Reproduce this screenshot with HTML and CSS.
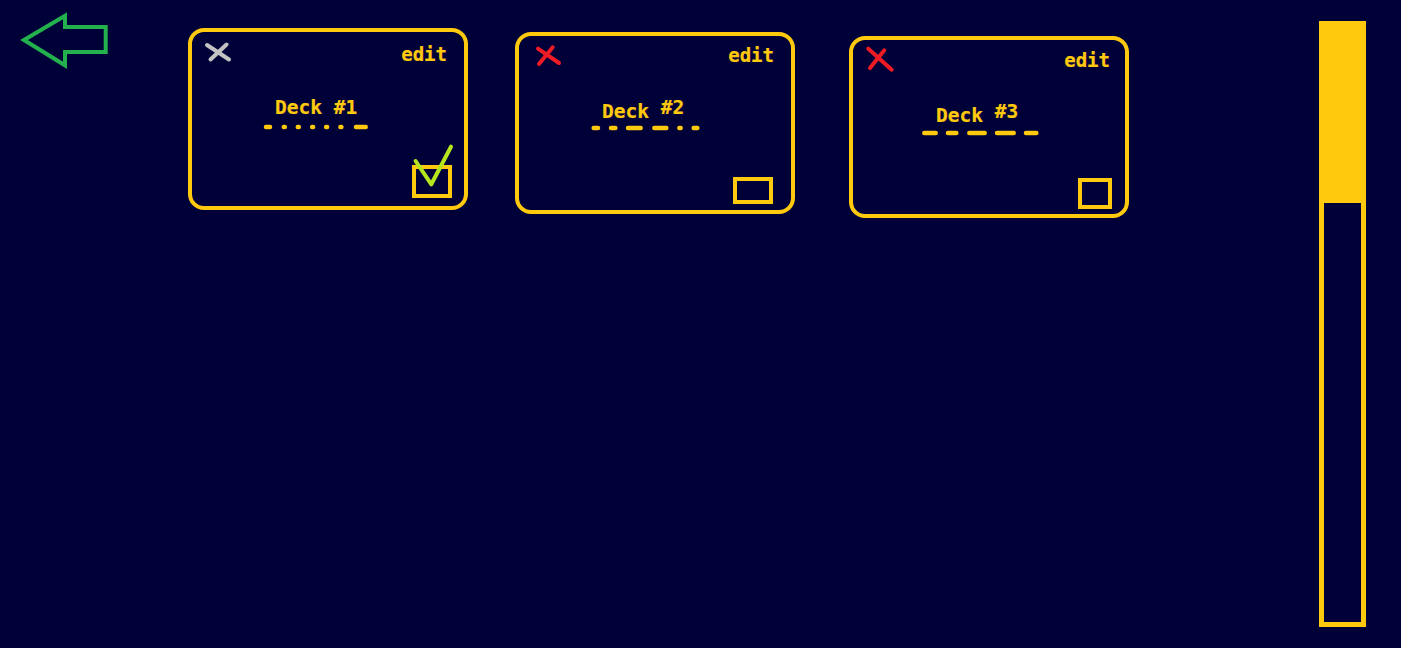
FILE: index.html
```html
<!DOCTYPE html>
<html lang="en">
<head>
<meta charset="utf-8">
<title>Decks</title>
<link rel="stylesheet" href="styles.css">
</head>
<body>
<div class="page">
  <svg class="back" width="90" height="60" viewBox="0 0 90 60">
    <polygon points="4,30 45,5.7 45,17 85.7,17 85.7,42 45,42 45,55.3" fill="none" stroke="#22b14c" stroke-width="4" stroke-linejoin="miter"/>
  </svg>

  <div class="deck-list">
    <div class="card card-1">
      <div class="card-top">
        <svg class="close" width="34" height="30" viewBox="0 0 34 30">
          <line x1="5" y1="9" x2="27" y2="23.5" stroke="#c3c3c3" stroke-width="4" stroke-linecap="round"/>
          <line x1="8.5" y1="23.5" x2="24.5" y2="8.5" stroke="#c3c3c3" stroke-width="4" stroke-linecap="round"/>
        </svg>
        <span class="edit">edit</span>
      </div>
      <div class="title"><span>Deck</span> <span class="num">#1</span></div>
      <svg class="underline" width="124" height="10" viewBox="0 0 124 10">
        <g stroke="#ffc90e" stroke-width="4.5" stroke-linecap="round">
          <line x1="8" y1="5" x2="12" y2="5"/>
          <line x1="25.8" y1="5" x2="26.8" y2="5"/>
          <line x1="39.8" y1="5" x2="40.8" y2="5"/>
          <line x1="54.1" y1="5" x2="55.1" y2="5"/>
          <line x1="68.1" y1="5" x2="69.1" y2="5"/>
          <line x1="82.4" y1="5" x2="83.4" y2="5"/>
          <line x1="98" y1="5" x2="107.7" y2="5"/>
        </g>
      </svg>
      <div class="card-foot">
        <div class="box">
          <svg class="tick" width="50" height="50" viewBox="0 0 50 50">
            <polyline points="5.6,20 21.3,43.3 41,5.7" fill="none" stroke="#b5e61d" stroke-width="4" stroke-linecap="round" stroke-linejoin="round"/>
          </svg>
        </div>
      </div>
    </div>

    <div class="card card-2">
      <div class="card-top">
        <svg class="close" width="34" height="30" viewBox="0 0 34 30">
          <line x1="9" y1="8.7" x2="30" y2="23" stroke="#ed1c24" stroke-width="4" stroke-linecap="round"/>
          <line x1="10" y1="24" x2="23.7" y2="7.3" stroke="#ed1c24" stroke-width="4" stroke-linecap="round"/>
        </svg>
        <span class="edit">edit</span>
      </div>
      <div class="title"><span>Deck</span> <span class="num raised">#2</span></div>
      <svg class="underline" width="124" height="10" viewBox="0 0 124 10">
        <g stroke="#ffc90e" stroke-width="4.5" stroke-linecap="round">
          <line x1="8.7" y1="5" x2="13" y2="5"/>
          <line x1="26" y1="5" x2="30.3" y2="5"/>
          <line x1="43" y1="5" x2="55.7" y2="5"/>
          <line x1="69.3" y1="5" x2="81.3" y2="5"/>
          <line x1="94.3" y1="5" x2="95.7" y2="5"/>
          <line x1="108.7" y1="5" x2="112.3" y2="5"/>
        </g>
      </svg>
      <div class="card-foot">
        <div class="box"></div>
      </div>
    </div>

    <div class="card card-3">
      <div class="card-top">
        <svg class="close" width="34" height="30" viewBox="0 0 34 30">
          <line x1="5.3" y1="4.7" x2="28.7" y2="25.7" stroke="#ed1c24" stroke-width="4" stroke-linecap="round"/>
          <line x1="7" y1="24" x2="21.3" y2="6.3" stroke="#ed1c24" stroke-width="4" stroke-linecap="round"/>
        </svg>
        <span class="edit">edit</span>
      </div>
      <div class="title"><span>Deck</span> <span class="num raised">#3</span></div>
      <svg class="underline" width="124" height="10" viewBox="0 0 124 10">
        <g stroke="#ffc90e" stroke-width="4.5" stroke-linecap="round">
          <line x1="5.3" y1="5" x2="16.7" y2="5"/>
          <line x1="29" y1="5" x2="37.3" y2="5"/>
          <line x1="50.3" y1="5" x2="65.7" y2="5"/>
          <line x1="78" y1="5" x2="94.7" y2="5"/>
          <line x1="107" y1="5" x2="117.3" y2="5"/>
        </g>
      </svg>
      <div class="card-foot">
        <div class="box"></div>
      </div>
    </div>
  </div>

  <div class="scrollbar">
    <div class="thumb"></div>
  </div>
</div>
</body>
</html>
```

FILE: styles.css
```css
html, body {
  margin: 0;
  padding: 0;
  background: #000039;
}

body {
  font-family: "DejaVu Sans Mono", "Liberation Mono", monospace;
  color: #ffc90e;
}

.page {
  display: flex;
  align-items: flex-start;
  height: 648px;
  overflow: hidden;
}

.back {
  display: block;
  flex: none;
  margin: 10px 0 0 20px;
}

.deck-list {
  display: flex;
  align-items: flex-start;
  gap: 47px;
  margin-left: 78px;
}

.card {
  --edit-top: 8px;
  --edit-right: 17px;
  --line-top: 4px;
  --box-w: 40px;
  --box-h: 33px;
  --box-right: 12px;
  --box-bottom: 8px;
  flex: none;
  width: 280px;
  height: 182px;
  box-sizing: border-box;
  border: 4px solid #ffc90e;
  border-radius: 16px;
  display: flex;
  flex-direction: column;
}

.card-1 {
  margin-top: 28px;
}

.card-2 {
  margin-top: 32px;
  --edit-top: 4.5px;
  --line-top: 1px;
  --box-h: 27px;
  --box-right: 18px;
  --box-bottom: 6px;
}

.card-3 {
  margin-top: 36px;
  margin-left: 7px;
  --edit-top: 6px;
  --edit-right: 15px;
  --line-top: 2px;
  --box-w: 34px;
  --box-h: 31px;
  --box-right: 13px;
  --box-bottom: 5px;
}

.card-top {
  display: flex;
  justify-content: space-between;
  align-items: flex-start;
  margin-top: 4px;
  padding: 0 var(--edit-right) 0 10px;
}

.close {
  display: block;
}

.edit {
  margin-top: var(--edit-top);
  font-size: 19px;
  line-height: 20px;
  font-weight: bold;
  -webkit-text-stroke: 0.2px #ffc90e;
}

.title {
  margin-top: 32px;
  padding-left: 83px;
  height: 20px;
  font-size: 19.5px;
  line-height: 20px;
  font-weight: bold;
  white-space: pre;
  -webkit-text-stroke: 0.2px #ffc90e;
}

.num.raised {
  position: relative;
  top: -4px;
}

.underline {
  display: block;
  margin: var(--line-top) 0 0 66px;
}

.card-foot {
  margin-top: auto;
  display: flex;
  justify-content: flex-end;
  padding: 0 var(--box-right) var(--box-bottom) 0;
}

.box {
  position: relative;
  width: var(--box-w);
  height: var(--box-h);
  box-sizing: border-box;
  border: 4px solid #ffc90e;
}

.tick {
  position: absolute;
  left: -6px;
  top: -28px;
}

.scrollbar {
  flex: none;
  margin: 21px 35px 0 auto;
  width: 47px;
  height: 606px;
  box-sizing: border-box;
  border: 5px solid #ffc90e;
}

.thumb {
  height: 177px;
  background: #ffc90e;
}
```
